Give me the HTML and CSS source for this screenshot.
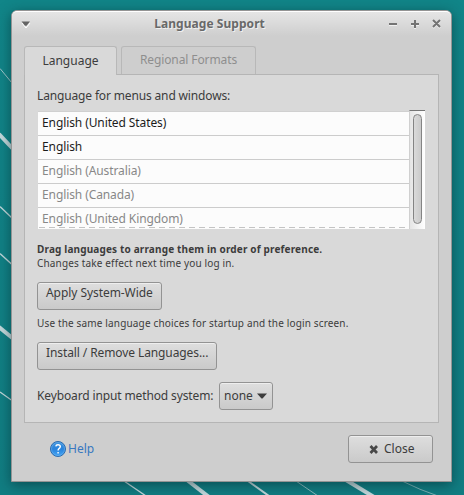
FILE: index.html
```
<!DOCTYPE html>
<html lang="en">
<head>
<meta charset="utf-8">
<title>Language Support</title>
<link rel="stylesheet" href="styles.css">
</head>
<body>
<svg class="wallpaper" width="464" height="495" viewBox="0 0 464 495" fill="none" stroke="#c3d8db">
  <path d="M0 68.500L12 83" opacity=".8"/>
  <path d="M-1 134L13 149" stroke-width="4"/>
  <path d="M0 206.500L12 218" stroke-width="1.300"/>
  <path d="M0 253.500L12 264.500" stroke-width="1.300"/>
  <path d="M-1 327L13 338.500" stroke-width="4"/>
  <path d="M0 392L12 400.500" stroke-width="1.200"/>
  <path d="M124 481L146 496" stroke-width="1.300"/>
  <path d="M187 480L209 497" stroke-width="4"/>
  <path d="M248 481L269 496" stroke-width="2"/>
  <path d="M296 481L318 496" stroke-width="1" opacity=".7"/>
  <path d="M346 480L374 497" stroke-width="4"/>
  <path d="M402 481Q420 490 438 496" stroke-width="1" opacity=".6"/>
</svg>
<main class="window">
  <header class="titlebar">
    <svg width="10" height="8" viewBox="0 0 10 8"><path d="M1 3L5 8L9 3" fill="none" stroke="#fff"/><path d="M0.500 1.500H9L5.500 5.800H4Z" fill="#646464"/></svg>
    <h1>Language Support</h1>
    <svg class="controls" width="54" height="12" viewBox="0 0 54 12" fill="none">
      <path d="M1 7H9M23 7H31M27 3V11M45 3L52 10M52 3L45 10" stroke="#f0f0f0" stroke-width="2"/>
      <path d="M1 6H9M23 6H31M27 2V10M45 2L52 9M52 2L45 9" stroke="#747474" stroke-width="2"/>
    </svg>
  </header>
  <nav class="tabs">
    <div class="tab active">Language</div>
    <div class="tab">Regional Formats</div>
  </nav>
  <section class="panel">
    <div class="label">Language for menus and windows:</div>
    <div class="list-box">
      <ul class="list">
        <li>English (United States)</li>
        <li>English</li>
        <li class="dim">English (Australia)</li>
        <li class="dim">English (Canada)</li>
        <li class="dim">English (United Kingdom)</li>
      </ul>
      <div class="scrollbar"><div class="thumb"></div></div>
    </div>
    <p class="note strong">Drag languages to arrange them in order of preference.</p>
    <p class="note">Changes take effect next time you log in.</p>
    <button class="button apply">Apply System-Wide</button>
    <p class="note startup">Use the same language choices for startup and the login screen.</p>
    <button class="button install">Install / Remove Languages...</button>
    <div class="method">
      <span class="label">Keyboard input method system:</span>
      <button class="button select">none<svg width="10" height="6" viewBox="0 0 10 6"><path d="M0 .5H10L5.500 5.500H4.500Z" fill="#3c3c3c"/></svg></button>
    </div>
  </section>
  <footer class="footer">
    <a class="help">
      <svg width="16" height="16" viewBox="0 0 16 16">
        <defs><linearGradient id="blue" x2="0" y2="1"><stop stop-color="#3f93dc"/><stop offset=".5" stop-color="#2a83dc"/><stop offset="1" stop-color="#42a5f5"/></linearGradient></defs>
        <circle cx="8" cy="8" r="7.500" fill="url(#blue)" stroke="#2b6cb0"/>
        <circle cx="8" cy="8" r="6.500" fill="none" stroke="#79b9ef" stroke-width=".5"/>
        <path d="M5.800 5.400Q6 3.700 8 3.700Q10.300 3.700 10.300 5.600Q10.300 6.800 9 7.600Q8.100 8.200 8.100 9.600M8.100 11V12.600" fill="none" stroke="#fff" stroke-width="1.400"/>
      </svg>
      <span>Help</span>
    </a>
    <button class="button close">
      <svg width="10" height="9" viewBox="0 0 10 9"><path d="M1.500 1L8 8M8 1L1.500 8" stroke="#484848" stroke-width="2.700"/></svg>
      <span>Close</span>
    </button>
  </footer>
</main>
</body>
</html>
```
FILE: styles.css
```
* { box-sizing: border-box; margin: 0; padding: 0; }
body {
  width: 464px;
  height: 495px;
  overflow: hidden;
  padding: 10px 0 0 11px;
  background: linear-gradient(#118588, #117d82);
  font: 12px/16px "Noto Sans", sans-serif;
  color: #3c3c3c;
}
svg { display: block; flex: none; }
.wallpaper { position: absolute; left: 0; top: 0; z-index: -1; }
.window {
  width: 441px;
  height: 472px;
  border: 1px solid #949494;
  border-radius: 6px 6px 0 0;
  background: #cecece;
  box-shadow: 0 3px 13px rgba(0, 30, 35, .5);
}
.titlebar {
  height: 25px;
  padding: 0 9px 0 9px;
  display: flex;
  align-items: center;
  border-top: 1px solid #fff;
  border-radius: 5px 5px 0 0;
  background: linear-gradient(#e5e5e5, #cecece);
}
.titlebar h1 {
  flex: 1;
  text-align: center;
  font-size: 12px;
  letter-spacing: .06px;
  color: #696969;
  text-shadow: 1px 1px #f0f0f0;
}
.controls { margin-top: -1px; }
.tabs {
  display: flex;
  align-items: flex-end;
  gap: 4px;
  margin: 10px 0 0 12px;
}
.tab {
  width: 135px;
  height: 28px;
  border: 1px solid #b8b8b8;
  border-bottom: 0;
  border-radius: 3px 3px 0 0;
  text-align: center;
  line-height: 26px;
  letter-spacing: -.1px;
  color: #8e8e8e;
}
.tab.active {
  position: relative;
  width: 93px;
  height: 29px;
  margin-bottom: -1px;
  line-height: 28px;
  letter-spacing: 0;
  background: #d9d9d9;
  color: #3c3c3c;
}
.panel {
  width: 415px;
  height: 349px;
  margin-left: 12px;
  padding: 13px 12px 0;
  border: 1px solid #b5b5b5;
  background: #d9d9d9;
}
.label { letter-spacing: -.15px; }
.list-box {
  display: flex;
  align-items: flex-end;
  margin: 6px 0 13px 1px;
  height: 119px;
}
.list {
  width: 371px;
  height: 118px;
  overflow: hidden;
  list-style: none;
  letter-spacing: -.1px;
  background: repeating-linear-gradient(90deg, #c4c4c4 0 6px, transparent 6px 10px) 1px 115px / 100% 1px no-repeat, #fcfcfc;
  border-top: 1px solid #d0d0d0;
}
.list li {
  height: 24px;
  padding-left: 4px;
  line-height: 22px;
  border-bottom: 1px solid #ccc;
  color: #1c1c1c;
}
.list li:first-child { height: 24px; }
.list li:last-child { border: 0; }
.list .dim { color: #888; }
.scrollbar {
  width: 16px;
  height: 119px;
  padding: 3px 3px 5px;
  border-top: 1px solid #757575;
  border-left: 1px solid #d0d0d0;
  background: linear-gradient(90deg, #e5e5e5, #fff);
}
.thumb {
  width: 9px;
  height: 110px;
  border: 1px solid #848484;
  border-radius: 5px;
  background: linear-gradient(90deg, #dadada, #cacaca);
}
.note { font-size: 10px; line-height: 14px; letter-spacing: .155px; }
.strong { font-weight: 700; }
.button {
  display: flex;
  align-items: center;
  height: 28px;
  border: 1px solid #939393;
  border-radius: 3px;
  background: linear-gradient(#dedede, #cacaca);
  box-shadow: inset 0 1px #eee;
  font: inherit;
  color: inherit;
}
.apply { width: 125px; margin-top: 12px; padding: 0 0 6px 8px; letter-spacing: -.06px; }
.install { width: 180px; padding: 0 0 6px 8px; letter-spacing: -.1px; }
.startup { margin: 6px 0 12px; }
.method { display: flex; align-items: center; gap: 6px; margin-top: 12px; }
.method .label { width: 176px; white-space: nowrap; letter-spacing: -.13px; }
.select { width: 54px; padding-left: 4px; gap: 4px; }
.footer {
  display: flex;
  justify-content: space-between;
  align-items: center;
  padding: 12px 18px 0 38px;
}
.help { display: flex; align-items: center; gap: 2px; color: #3878c0; }
.close { width: 85px; padding-left: 20px; gap: 5px; }
```
